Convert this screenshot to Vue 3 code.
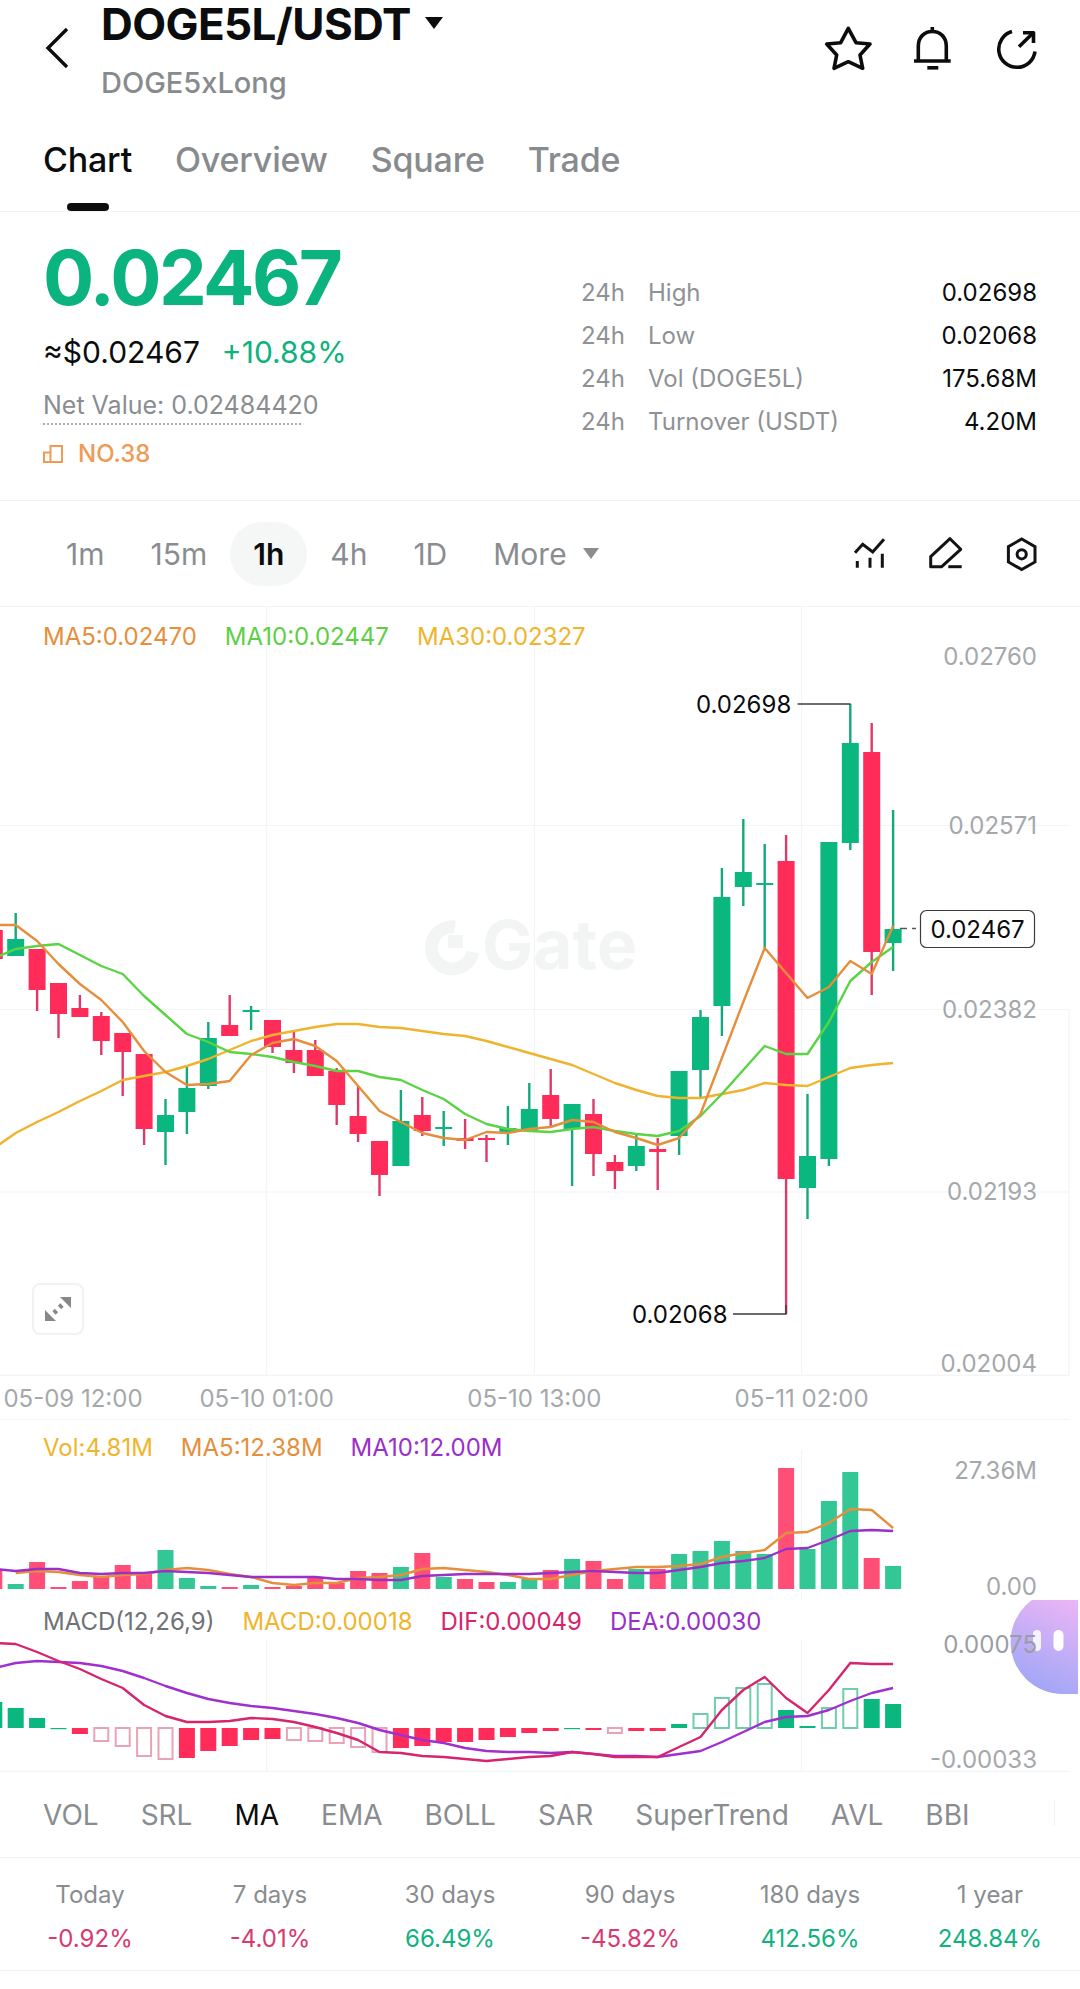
<script setup>
const X = (i) => 15.7 + 21.4 * i
const R = '#ff2c5a'
const G = '#0ab77e'
// i, colour, body top, body bottom, wick top, wick bottom
const raw = [
  [-1,'r',930,959,920,959],[0,'g',939,956,913,956],[1,'r',949,990,949,1011],[2,'r',983,1014,983,1038],[3,'r',1008,1017,995,1017],
  [4,'r',1016,1041,1012,1055],[5,'r',1033,1052,1033,1096],[6,'r',1054,1129,1054,1145],[7,'g',1115,1132,1099,1165],[8,'g',1088,1112,1067,1134],
  [9,'g',1038,1086,1022,1089],[10,'r',1025,1036,995,1036],[11,'g',1010,1012,1006,1030],[12,'r',1020,1047,1020,1053],[13,'r',1050,1063,1030,1073],
  [14,'r',1050,1076,1040,1076],[15,'r',1071,1105,1068,1125],[16,'r',1116,1134,1086,1142],[17,'r',1141,1175,1141,1196],[18,'g',1121,1166,1090,1166],
  [19,'r',1115,1131,1097,1136],[20,'g',1127,1129,1111,1146],[21,'r',1138,1141,1119,1149],[22,'r',1138,1140,1135,1162],[23,'g',1128,1132,1106,1145],
  [24,'g',1109,1131,1083,1131],[25,'r',1095,1119,1069,1127],[26,'g',1104,1129,1104,1186],[27,'r',1114,1154,1099,1176],[28,'r',1162,1171,1155,1189],
  [29,'g',1146,1166,1135,1171],[30,'r',1149,1152,1138,1190],[31,'g',1071,1136,1071,1155],[32,'g',1017,1070,1010,1097],[33,'g',897,1006,868,1036],
  [34,'g',872,887,819,906],[35,'g',883,885,844,949],[36,'r',861,1179,835,1314],[37,'g',1156,1188,1094,1219],[38,'g',842,1159,842,1166],
  [39,'g',743,843,704,850],[40,'r',752,952,723,995],[41,'g',929,943,810,971],
]
const candles = raw.map(([i, c, t, b, wt, wb]) => ({
  x: X(i), c, t, h: b - t, wt, wb,
  fill: c === 'r' ? R : G,
  wick: c === 'r' ? '#dc3a68' : '#14a97c',
}))
const line = (start, ys) => ys.map((y, i) => `${X(i + start).toFixed(1)},${y}`).join(' ')
const ma5 = line(-1, [925,925,941,964,984,1000,1022,1051,1072,1085,1084,1081,1055,1043,1039,1046,1061,1086,1111,1122,1133,1138,1140,1132,1133,1129,1127,1120,1122,1132,1138,1145,1138,1114,1058,1002,948,973,998,987,961,974,926])
const ma10 = line(-1, [958,949,946,944,955,966,974,996,1015,1034,1042,1052,1054,1057,1062,1066,1071,1071,1077,1080,1090,1099,1114,1124,1129,1131,1132,1129,1127,1131,1134,1136,1131,1116,1094,1070,1046,1054,1054,1022,981,962,947])
const ma30 = line(-1, [1148,1133,1122,1112,1101,1091,1080,1076,1072,1066,1059,1050,1041,1035,1031,1027,1024,1024,1027,1028,1031,1034,1036,1041,1047,1053,1059,1065,1074,1083,1090,1096,1098,1098,1094,1090,1083,1085,1086,1077,1068,1065,1063])

const volTops = [1570,1584,1562,1587,1581,1576,1565,1574,1550,1578,1586,1587,1585,1587,1586,1577,1583,1571,1573,1567,1553,1577,1579,1582,1582,1579,1570,1559,1561,1579,1569,1569,1554,1551,1541,1551,1554,1468,1549,1501,1472,1558,1566]
const volColors = 'rgrrrrrrgggrgrrrrrrgrgrrggrgrrgrggggg rgggrg'.replace(/\s/g, '')
const volBars = volTops.map((t, k) => {
  const i = k - 1
  const rr = [-1,1,2,3,4,5,6,10,12,13,14,15,16,17,19,21,22,25,27,28,30,36,40].includes(i)
  return { x: X(i), t, h: 1589 - t, fill: rr ? '#ff4f76' : '#33c795' }
})
const volMa10 = line(-1, [1569,1571,1569,1569,1573,1574,1573,1573,1571,1572,1573,1575,1577,1577,1577,1577,1579,1579,1580,1580,1576,1575,1574,1574,1574,1574,1573,1572,1571,1572,1573,1573,1570,1567,1563,1561,1558,1549,1548,1540,1531,1530,1531])
const volMa5 = line(0, [1573,1571,1572,1575,1577,1575,1574,1570,1568,1570,1574,1577,1583,1585,1583,1583,1578,1577,1575,1569,1568,1570,1572,1575,1579,1579,1575,1571,1569,1567,1567,1566,1564,1557,1553,1550,1533,1532,1523,1509,1510,1528])

const Z = 1728
// i, top or bottom edge of the bar, solid
const macdRaw = [
  [-1,1702,1],[0,1708,1],[1,1718,1],[2,1728,1],[3,1734,1],[4,1741,0],[5,1746,0],[6,1756,0],[7,1759,0],[8,1758,1],[9,1751,1],[10,1746,1],[11,1740,1],[12,1739,1],
  [13,1740,0],[14,1741,0],[15,1743,0],[16,1747,0],[17,1752,0],[18,1748,1],[19,1746,1],[20,1742,1],[21,1742,1],[22,1740,1],[23,1737,1],[24,1733,1],[25,1731,1],
  [26,1728,1],[27,1730,1],[28,1733,0],[29,1731,1],[30,1731,1],[31,1724,1],[32,1714,0],[33,1698,0],[34,1688,0],[35,1684,0],[36,1710,1],[37,1726,1],[38,1708,0],[39,1689,0],[40,1699,1],[41,1704,1],
]
const macdBars = macdRaw.map(([i, e, solid]) => {
  const up = e <= Z
  const t = Math.min(e, Z)
  const h = Math.max(Math.abs(e - Z), 1.2)
  return {
    x: X(i), t, h, solid,
    fill: solid ? (up ? G : R) : 'none',
    stroke: solid ? 'none' : (up ? '#6fcdac' : '#e8a3b6'),
  }
})
const dif = line(-1, [1643,1644,1652,1661,1669,1679,1688,1705,1716,1722,1722,1721,1718,1719,1722,1727,1733,1740,1752,1753,1756,1757,1759,1761,1759,1757,1756,1752,1754,1757,1757,1757,1747,1737,1710,1690,1677,1698,1713,1690,1663,1664,1664])
const dea = line(-1, [1668,1663,1661,1662,1663,1666,1671,1678,1686,1693,1699,1703,1706,1708,1711,1714,1718,1723,1730,1735,1740,1743,1748,1751,1752,1752,1753,1752,1754,1756,1756,1757,1754,1751,1742,1732,1722,1717,1716,1710,1701,1693,1688])

const tabs = ['Chart', 'Overview', 'Square', 'Trade']
const stats = [
  ['High', '0.02698'],
  ['Low', '0.02068'],
  ['Vol (DOGE5L)', '175.68M'],
  ['Turnover (USDT)', '4.20M'],
]
const intervals = ['1m', '15m', '1h', '4h', '1D']
const indicators = ['VOL', 'SRL', 'MA', 'EMA', 'BOLL', 'SAR', 'SuperTrend', 'AVL', 'BBI']
const perf = [
  ['Today', '-0.92%', 'down'],
  ['7 days', '-4.01%', 'down'],
  ['30 days', '66.49%', 'up'],
  ['90 days', '-45.82%', 'down'],
  ['180 days', '412.56%', 'up'],
  ['1 year', '248.84%', 'up'],
]
const hLines = [825.5, 1009.5, 1192]
const vLines = [266.7, 534.4, 801.6]
const priceAxis = [['0.02760', 656], ['0.02571', 825], ['0.02382', 1009], ['0.02193', 1191], ['0.02004', 1363]]
const dates = [['05-09 12:00', 73], ['05-10 01:00', 266.7], ['05-10 13:00', 534.4], ['05-11 02:00', 801.6]]
</script>

<template>
  <div class="page">
    <header class="header">
      <svg class="back" viewBox="0 0 30 46" width="30" height="46">
        <path d="M25 4 L6 23 L25 42" fill="none" stroke="#0b0c0e" stroke-width="3.4" />
      </svg>
      <div class="title-col">
        <div class="title-row">
          <span class="title">DOGE5L/USDT</span>
          <svg class="caret" viewBox="0 0 18 12" width="18" height="12"><path d="M0 0H18L9 12Z" fill="#0b0c0e" /></svg>
        </div>
        <div class="subtitle">DOGE5xLong</div>
      </div>
      <svg class="actions" viewBox="824 24 214 48" width="214" height="48">
        <g fill="none" stroke="#0b0c0e" stroke-width="3.6" stroke-linejoin="round">
          <path d="M848.3 28.3 856 42.7 870 44 860 55 862.7 68.3 848.3 61.7 834 68.3 836.7 55 826.7 44 840.7 42.7Z" />
          <path d="M918.3 61V46C918.3 37 924.5 31.5 932.3 31.5S946.3 37 946.3 46V61" />
          <path d="M914 61H950.7" />
          <path d="M927.3 67.8H938.3" />
          <path d="M932.3 27V31" />
          <path d="M1012 31.6A18.2 18.2 0 1 0 1035 51.5" />
          <path d="M1019 46.7 1033 33" />
          <path d="M1023 32.8H1033.5V43" />
        </g>
      </svg>
    </header>

    <nav class="tabs">
      <span v-for="(t, i) in tabs" :key="t" class="tab" :class="{ active: i === 0 }">{{ t }}</span>
    </nav>

    <section class="summary">
      <div class="summary-left">
        <div class="big-price">0.02467</div>
        <div class="sub-price">
          <span class="usd">≈$0.02467</span>
          <span class="change">+10.88%</span>
        </div>
        <div class="net-value">Net Value: 0.02484420</div>
        <div class="rank">
          <svg viewBox="0 0 20 18" width="20" height="18">
            <path d="M1 7.5H7.5V17H1ZM7.5 17V1H19V17H7.5" fill="none" stroke="#ef9a55" stroke-width="2" />
          </svg>
          <span>NO.38</span>
        </div>
      </div>
      <div class="summary-right">
        <div v-for="s in stats" :key="s[0]" class="stat-row">
          <span class="stat-period">24h</span>
          <span class="stat-label">{{ s[0] }}</span>
          <span class="stat-value">{{ s[1] }}</span>
        </div>
      </div>
    </section>

    <section class="interval-bar">
      <div class="intervals">
        <span v-for="n in intervals" :key="n" class="interval" :class="{ active: n === '1h' }">{{ n }}</span>
        <span class="interval more">More
          <svg viewBox="0 0 16 11" width="16" height="11"><path d="M0 0H16L8 11Z" fill="#8a8d90" /></svg>
        </span>
      </div>
      <svg class="tools" viewBox="853 534 186 38" width="186" height="38">
        <g fill="none" stroke="#121315" stroke-width="3" stroke-linejoin="miter">
          <path d="M855 551.7 862.7 543.3 872.7 551 884 538.3" />
          <path d="M857.3 560V566.7M870 556.7V566.7M882.3 552.7V566.7" />
          <path d="M950 537.7 960.7 548.3 941.7 565.7H930.7V555.7Z" stroke-linejoin="round" />
          <path d="M948.3 565.7H961.7" />
          <path d="M1021.7 538 1035 545.6V561 L1021.7 568.6 1008.4 561V545.6Z" />
          <circle cx="1021.7" cy="553.3" r="4.6" />
        </g>
      </svg>
    </section>

    <section class="chart">
      <div class="pane pane-main">
        <svg class="pane-svg" viewBox="0 607 1080 769" width="1080" height="769">
          <g stroke="#f3f4f5" stroke-width="1.2">
            <line v-for="y in hLines" :key="y" x1="0" x2="1069" :y1="y" :y2="y" />
            <line v-for="x in vLines" :key="x" :x1="x" :x2="x" y1="607" y2="1376" />
            <line x1="1069" x2="1069" y1="1009" y2="1376" />
            <line x1="0" x2="1069" y1="1375.4" y2="1375.4" />
          </g>
          <g class="watermark">
            <path d="M455 927A21 21 0 1 0 473 952" fill="none" stroke="#f3f5f5" stroke-width="13" />
            <rect x="448" y="935" width="15" height="13" fill="#f3f5f5" />
            <text x="482" y="969" class="wm-text">Gate</text>
          </g>
          <g v-for="(c, k) in candles" :key="k">
            <line :x1="c.x" :x2="c.x" :y1="c.wt" :y2="c.wb" :stroke="c.wick" stroke-width="2.4" />
            <rect :x="c.x - 8.5" :y="c.t" width="17" :height="c.h" :fill="c.fill" />
          </g>
          <polyline :points="ma30" fill="none" stroke="#efb32d" stroke-width="2.4" stroke-linejoin="round" />
          <polyline :points="ma10" fill="none" stroke="#5ad344" stroke-width="2.4" stroke-linejoin="round" />
          <polyline :points="ma5" fill="none" stroke="#e58f3c" stroke-width="2.4" stroke-linejoin="round" />

          <path d="M797.6 704H850.6" stroke="#3a3c3f" stroke-width="1.4" fill="none" />
          <path d="M733 1314H786V1305" stroke="#3a3c3f" stroke-width="1.4" fill="none" />
          <path d="M900 928.5H916" stroke="#55585b" stroke-width="1.4" stroke-dasharray="7 5" fill="none" />
          <text x="696" y="713" class="mark">0.02698</text>
          <text x="632" y="1323" class="mark">0.02068</text>
          <text v-for="p in priceAxis" :key="p[0]" x="1037" :y="p[1] + 9" text-anchor="end" class="axis">{{ p[0] }}</text>
          <rect x="920.5" y="910.5" width="114" height="37" rx="6" fill="#fff" stroke="#3a3c3f" stroke-width="1.2" />
          <text x="977.5" y="938" text-anchor="middle" class="mark">0.02467</text>
        </svg>
        <div class="legend legend-main">
          <span class="c-ma5">MA5:0.02470</span>
          <span class="c-ma10">MA10:0.02447</span>
          <span class="c-ma30">MA30:0.02327</span>
        </div>
        <div class="expand">
          <svg viewBox="0 0 30 30" width="30" height="30">
            <path d="M17 3H28V14ZM2 16V27H13Z" fill="#86898c" />
            <path d="M19 11 16.5 13.5M13.5 16.5 11 19" stroke="#86898c" stroke-width="4.6" fill="none" />
          </svg>
        </div>
      </div>

      <svg class="dates" viewBox="0 1376 1080 44" width="1080" height="44">
        <text v-for="d in dates" :key="d[0]" :x="d[1]" y="1407" text-anchor="middle" class="axis">{{ d[0] }}</text>
        <line x1="0" x2="1069" y1="1419.5" y2="1419.5" stroke="#f3f4f5" stroke-width="1.2" />
      </svg>

      <div class="pane pane-vol">
        <svg class="pane-svg" viewBox="0 1420 1080 180" width="1080" height="180">
          <g stroke="#f3f4f5" stroke-width="1.2">
            <line x1="266.7" x2="266.7" y1="1450" y2="1600" />
            <line x1="801.6" x2="801.6" y1="1450" y2="1600" />
          </g>
          <rect v-for="(b, k) in volBars" :key="k" :x="b.x - 8" :y="b.t" width="16" :height="b.h" :fill="b.fill" />
          <polyline :points="volMa5" fill="none" stroke="#e58f3c" stroke-width="2.4" stroke-linejoin="round" />
          <polyline :points="volMa10" fill="none" stroke="#9b30c8" stroke-width="2.4" stroke-linejoin="round" />
          <text x="1037" y="1479" text-anchor="end" class="axis">27.36M</text>
          <text x="1037" y="1595" text-anchor="end" class="axis">0.00</text>
        </svg>
        <div class="legend legend-vol">
          <span class="c-ma30">Vol:4.81M</span>
          <span class="c-ma5">MA5:12.38M</span>
          <span class="c-dea">MA10:12.00M</span>
        </div>
      </div>

      <div class="pane pane-macd">
        <svg class="pane-svg" viewBox="0 1600 1080 172" width="1080" height="172">
          <defs>
            <linearGradient id="bubble" x1="0.75" y1="0" x2="0.45" y2="1">
              <stop offset="0" stop-color="#eeb6f6" />
              <stop offset="1" stop-color="#9fa6f6" />
            </linearGradient>
          </defs>
          <g stroke="#f3f4f5" stroke-width="1.2">
            <line x1="266.7" x2="266.7" y1="1640" y2="1772" />
            <line x1="801.6" x2="801.6" y1="1640" y2="1772" />
            <line x1="0" x2="1069" y1="1771.4" y2="1771.4" />
          </g>
          <template v-for="(b, k) in macdBars" :key="k">
            <rect v-if="b.solid" :x="b.x - 8" :y="b.t" width="16" :height="b.h" :fill="b.fill" />
            <rect v-else :x="b.x - 7" :y="b.t" width="14" :height="b.h" fill="none" :stroke="b.stroke" stroke-width="2" />
          </template>
          <polyline :points="dea" fill="none" stroke="#a02fd0" stroke-width="2.4" stroke-linejoin="round" />
          <polyline :points="dif" fill="none" stroke="#d6246e" stroke-width="2.4" stroke-linejoin="round" />
          <path d="M1078 1590H1062.6A52 52 0 0 0 1062.6 1694H1078Z" fill="url(#bubble)" />
          <rect x="1033" y="1630" width="8" height="21" rx="4" fill="#fff" opacity="0.85" />
          <rect x="1053.5" y="1630" width="10" height="21" rx="5" fill="#fff" />
          <text x="1037" y="1653" text-anchor="end" class="axis axis-over">0.00075</text>
          <text x="1037" y="1768" text-anchor="end" class="axis">-0.00033</text>
        </svg>
        <div class="legend legend-macd">
          <span class="c-macd">MACD(12,26,9)</span>
          <span class="c-ma30">MACD:0.00018</span>
          <span class="c-dif">DIF:0.00049</span>
          <span class="c-dea">DEA:0.00030</span>
        </div>
      </div>
    </section>

    <section class="indicators">
      <span v-for="n in indicators" :key="n" class="indicator" :class="{ active: n === 'MA' }">{{ n }}</span>
      <i class="ind-edge"></i>
    </section>

    <section class="perf">
      <div v-for="p in perf" :key="p[0]" class="perf-col">
        <span class="perf-label">{{ p[0] }}</span>
        <span class="perf-value" :class="p[2]">{{ p[1] }}</span>
      </div>
    </section>
  </div>
</template>

<style>
html, body { margin: 0; background: #fff; }
</style>

<style scoped>
.page {
  width: 1080px;
  height: 1989px;
  background: #fff;
  font-family: Inter, "Liberation Sans", sans-serif;
  color: #0b0c0e;
  overflow: hidden;
}
.header {
  display: flex;
  height: 118px;
  padding: 0 42px 0 42px;
  position: relative;
}
.back { margin-top: 25px; flex: none; }
.title-col { margin-left: 29px; flex: 1; }
.title-row { display: flex; align-items: center; height: 48px; gap: 14px; }
.title { font-size: 44px; font-weight: 700; letter-spacing: -0.6px; line-height: 48px; }
.caret { margin-top: -2px; }
.subtitle { font-size: 29px; font-weight: 500; color: #888b8e; line-height: 36px; margin-top: 17px; }
.actions { margin-top: 24px; flex: none; }

.tabs {
  display: flex;
  gap: 43px;
  padding: 22px 43px 0;
  height: 71px;
  border-bottom: 1px solid #f2f3f4;
  box-sizing: content-box;
  box-sizing: border-box;
  height: 94px;
}
.tab { font-size: 34px; font-weight: 500; line-height: 40px; color: #888b8e; position: relative; height: 40px; letter-spacing: -0.2px; }
.tab.active { color: #0b0c0e; }
.tab.active::after {
  content: "";
  position: absolute;
  left: 24px;
  width: 42px;
  height: 8px;
  bottom: -31px;
  border-radius: 4px;
  background: #0b0c0e;
}

.summary {
  display: flex;
  height: 289px;
  box-sizing: border-box;
  border-bottom: 1px solid #f2f3f4;
  padding: 0 43px;
  justify-content: space-between;
}
.big-price { font-size: 76px; font-weight: 700; line-height: 80px; margin-top: 25px; color: #0bb37e; letter-spacing: -2.5px; }
.sub-price { display: flex; gap: 22px; font-size: 30px; line-height: 36px; margin-top: 17px; }
.change { color: #0db27c; }
.net-value {
  font-size: 25px;
  color: #8a8d90;
  line-height: 34px;
  margin-top: 18px;
  width: 258px;
  white-space: nowrap;
  border-bottom: 2px dotted #a9acaf;
  padding-bottom: 1px;
}
.rank { display: flex; align-items: center; gap: 15px; margin-top: 15px; color: #ef9a55; font-size: 24px; font-weight: 500; line-height: 28px; }
.summary-right { width: 456px; padding-top: 59px; }
.stat-row { display: flex; align-items: center; height: 43px; font-size: 24px; }
.stat-period { width: 67px; color: #8f9295; }
.stat-label { flex: 1; color: #8f9295; }
.stat-value { color: #0b0c0e; }

.interval-bar {
  height: 106px;
  display: flex;
  align-items: center;
  justify-content: space-between;
  padding: 0 41px 0 43px;
  box-sizing: border-box;
  border-bottom: 1px solid #f2f3f4;
}
.intervals { display: flex; align-items: center; }
.interval { font-size: 30px; line-height: 64px; padding: 0 23px; color: #8a8d90; border-radius: 32px; }
.interval.active { color: #0b0c0e; background: #f5f6f6; font-weight: 600; }
.more { display: flex; align-items: center; gap: 16px; }

.chart { position: relative; }
.pane { position: relative; }
.pane-svg, .dates { display: block; }
.pane-main { height: 769px; }
.pane-vol { height: 180px; }
.pane-macd { height: 172px; }
.legend {
  position: absolute;
  left: 43px;
  display: flex;
  gap: 28px;
  font-size: 24px;
  line-height: 30px;
  white-space: nowrap;
}
.legend-main { top: 15px; }
.legend-vol { top: 13px; }
.legend-macd { top: 7px; }
.c-ma5 { color: #e58f3c; }
.c-ma10 { color: #5ccf45; }
.c-ma30 { color: #efb52c; }
.c-macd { color: #6f7276; }
.c-dif { color: #d6246e; }
.c-dea { color: #9b30c8; }
.expand {
  position: absolute;
  left: 32px;
  top: 676px;
  width: 52px;
  height: 52px;
  box-sizing: border-box;
  border: 2px solid #f1f2f3;
  border-radius: 8px;
  background: #fff;
  display: flex;
  align-items: center;
  justify-content: center;
}
svg text { font-family: Inter, "Liberation Sans", sans-serif; font-size: 24px; }
.axis { fill: #a5a8ab; }
.axis-over { fill: #9a9da4; }
.mark { fill: #0b0c0e; }
.wm-text { font-size: 68px; font-weight: 700; fill: #f3f5f5; }

.indicators {
  height: 86px;
  display: flex;
  align-items: center;
  gap: 42px;
  padding-left: 43px;
  box-sizing: border-box;
  border-bottom: 1px solid #f2f3f4;
  position: relative;
  margin-top: 0;
}
.indicator { font-size: 28px; color: #8a8d90; }
.indicator.active { color: #0b0c0e; }
.ind-edge { position: absolute; left: 1054px; top: 28px; height: 26px; width: 1px; background: #f0f1f2; }

.perf {
  display: grid;
  grid-template-columns: repeat(6, 180px);
  height: 113px;
  box-sizing: border-box;
  border-bottom: 1px solid #f2f3f4;
}
.perf-col { display: flex; flex-direction: column; align-items: center; padding-top: 21px; gap: 12px; }
.perf-label { font-size: 24px; line-height: 32px; color: #8a8d90; }
.perf-value { font-size: 24px; line-height: 32px; }
.perf-value.up { color: #12b280; }
.perf-value.down { color: #d9396f; }
</style>
